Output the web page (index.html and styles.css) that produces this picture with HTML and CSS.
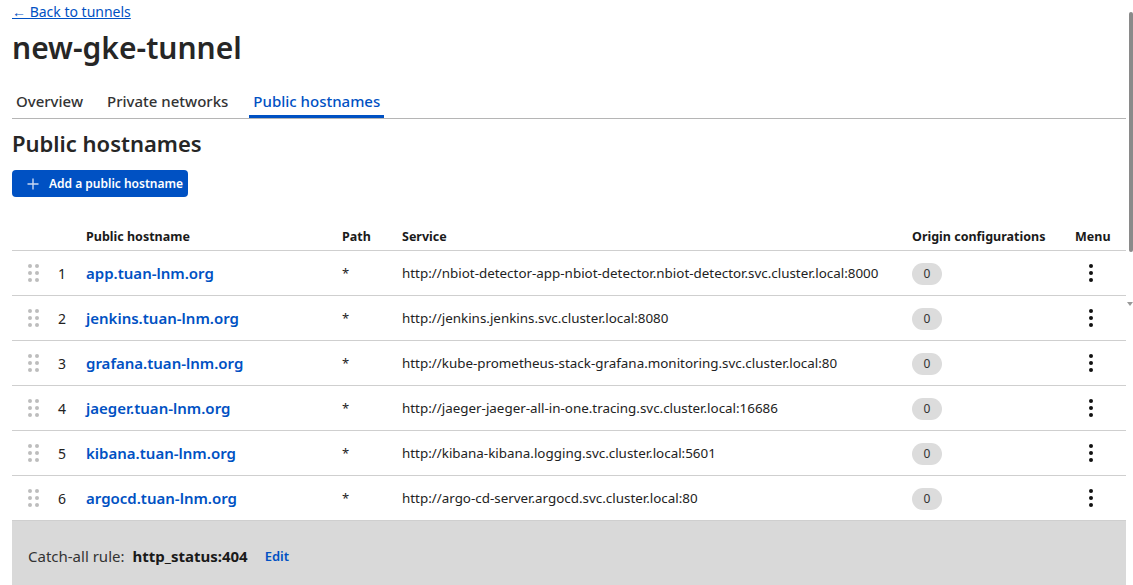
FILE: index.html
```html
<!DOCTYPE html>
<html>
<head>
<meta charset="utf-8">
<link rel="stylesheet" href="styles.css">
</head>
<body>
<div class="page">
  <a class="back" href="#">← Back to tunnels</a>
  <h1 class="title">new-gke-tunnel</h1>
  <nav class="tabs">
    <span class="tab">Overview</span>
    <span class="tab">Private networks</span>
    <span class="tab active">Public hostnames</span>
  </nav>
  <h2 class="section">Public hostnames</h2>
  <button class="add-btn">
    <svg class="plus" width="12" height="12" viewBox="0 0 12 12"><path d="M6 0.5V11.5M0.5 6H11.5" stroke="#c9d8f2" stroke-width="1.4" fill="none"/></svg>
    Add a public hostname
  </button>

  <div class="table">
    <div class="row head">
      <div class="c-idx"></div>
      <div>Public hostname</div>
      <div>Path</div>
      <div>Service</div>
      <div>Origin configurations</div>
      <div>Menu</div>
    </div>

    <div class="row">
      <div class="c-idx"><span class="grip"><i></i><i></i><i></i><i></i><i></i><i></i></span><span class="num">1</span></div>
      <div><a class="host" href="#">app.tuan-lnm.org</a></div>
      <div class="path">*</div>
      <div class="svc">http://nbiot-detector-app-nbiot-detector.nbiot-detector.svc.cluster.local:8000</div>
      <div><span class="badge">0</span></div>
      <div><span class="kebab"><i></i><i></i><i></i></span></div>
    </div>
    <div class="row">
      <div class="c-idx"><span class="grip"><i></i><i></i><i></i><i></i><i></i><i></i></span><span class="num">2</span></div>
      <div><a class="host" href="#">jenkins.tuan-lnm.org</a></div>
      <div class="path">*</div>
      <div class="svc">http://jenkins.jenkins.svc.cluster.local:8080</div>
      <div><span class="badge">0</span></div>
      <div><span class="kebab"><i></i><i></i><i></i></span></div>
    </div>
    <div class="row">
      <div class="c-idx"><span class="grip"><i></i><i></i><i></i><i></i><i></i><i></i></span><span class="num">3</span></div>
      <div><a class="host" href="#">grafana.tuan-lnm.org</a></div>
      <div class="path">*</div>
      <div class="svc">http://kube-prometheus-stack-grafana.monitoring.svc.cluster.local:80</div>
      <div><span class="badge">0</span></div>
      <div><span class="kebab"><i></i><i></i><i></i></span></div>
    </div>
    <div class="row">
      <div class="c-idx"><span class="grip"><i></i><i></i><i></i><i></i><i></i><i></i></span><span class="num">4</span></div>
      <div><a class="host" href="#">jaeger.tuan-lnm.org</a></div>
      <div class="path">*</div>
      <div class="svc">http://jaeger-jaeger-all-in-one.tracing.svc.cluster.local:16686</div>
      <div><span class="badge">0</span></div>
      <div><span class="kebab"><i></i><i></i><i></i></span></div>
    </div>
    <div class="row">
      <div class="c-idx"><span class="grip"><i></i><i></i><i></i><i></i><i></i><i></i></span><span class="num">5</span></div>
      <div><a class="host" href="#">kibana.tuan-lnm.org</a></div>
      <div class="path">*</div>
      <div class="svc">http://kibana-kibana.logging.svc.cluster.local:5601</div>
      <div><span class="badge">0</span></div>
      <div><span class="kebab"><i></i><i></i><i></i></span></div>
    </div>
    <div class="row">
      <div class="c-idx"><span class="grip"><i></i><i></i><i></i><i></i><i></i><i></i></span><span class="num">6</span></div>
      <div><a class="host" href="#">argocd.tuan-lnm.org</a></div>
      <div class="path">*</div>
      <div class="svc">http://argo-cd-server.argocd.svc.cluster.local:80</div>
      <div><span class="badge">0</span></div>
      <div><span class="kebab"><i></i><i></i><i></i></span></div>
    </div>
  </div>

  <div class="catchall">
    <span class="ca-label">Catch-all rule:</span>
    <span class="ca-value">http_status:404</span>
    <a class="ca-edit" href="#">Edit</a>
  </div>
</div>
<div class="scrollbar"><div class="thumb"></div><div class="arrow"></div></div>
</body>
</html>
```
FILE: styles.css
```css
html, body {
  margin: 0;
  padding: 0;
  background: #fff;
  overflow: hidden;
}
body {
  font-family: "Noto Sans", "Open Sans", sans-serif;
  color: #222;
}
.page {
  width: 1114px;
  padding: 0 0 0 12px;
}
.back {
  display: block;
  font-size: 14px;
  line-height: 16px;
  padding-top: 4px;
  color: #0051c3;
  text-decoration: underline;
}
.title {
  margin: 8px 0 0 0;
  font-size: 30px;
  line-height: 40px;
  font-weight: 600;
  color: #262626;
}
.tabs {
  display: flex;
  margin-top: 17px;
  border-bottom: 1px solid #b5b5b5;
  height: 34px;
  box-sizing: border-box;
}
.tab {
  font-size: 15px;
  font-weight: 500;
  color: #333;
  padding: 5px 4px 0 4px;
  margin-right: 16px;
  line-height: 22px;
  box-sizing: border-box;
}
.tab.active {
  color: #0051c3;
  border-bottom: 3px solid #0051c3;
  height: 33px;
  margin-left: 1px;
}
.section {
  margin: 8px 0 0 0;
  font-size: 22px;
  line-height: 32px;
  font-weight: 600;
  color: #262626;
}
.add-btn {
  display: flex;
  align-items: center;
  gap: 10px;
  margin-top: 11px;
  height: 27px;
  width: 176px;
  padding: 0 0 0 15px;
  border: none;
  border-radius: 4px;
  background: #0051c3;
  color: #fff;
  font-family: inherit;
  font-size: 12px;
  font-weight: 600;
}
.table {
  margin-top: 25px;
}
.row {
  display: grid;
  grid-template-columns: 74px 256px 60px 510px 163px 51px;
  align-items: center;
  height: 45px;
  border-bottom: 1px solid #cfcfcf;
  box-sizing: border-box;
  font-size: 13px;
}
.row.head {
  height: 29px;
  font-weight: 700;
  font-size: 12.5px;
  color: #1a1a1a;
}
.c-idx {
  display: flex;
  align-items: center;
}
.grip {
  display: grid;
  grid-template-columns: 4px 4px;
  column-gap: 3px;
  row-gap: 3px;
  margin-left: 16px;
}
.grip i {
  width: 4px;
  height: 4px;
  border-radius: 50%;
  background: #bdbdbd;
}
.num {
  margin-left: 19px;
  font-size: 14px;
  color: #222;
}
.host {
  color: #0051c3;
  font-size: 15px;
  font-weight: 600;
  text-decoration: none;
}
.path {
  font-size: 13px;
}
.svc {
  font-size: 13.4px;
  color: #222;
  white-space: nowrap;
}
.badge {
  display: inline-block;
  width: 30px;
  height: 22px;
  line-height: 22px;
  border-radius: 11px;
  background: #dcdcdc;
  text-align: center;
  font-size: 12px;
  color: #333;
  margin-top: 2px;
}
.kebab {
  display: flex;
  flex-direction: column;
  gap: 3px;
  margin-left: 14px;
  width: 4px;
}
.kebab i {
  width: 4px;
  height: 4px;
  border-radius: 50%;
  background: #111;
}
.catchall {
  background: #d9d9d9;
  height: 70px;
  display: flex;
  align-items: center;
  padding: 0 0 0 16px;
  font-size: 15px;
}
.ca-label {
  color: #333;
}
.ca-value {
  font-weight: 700;
  margin-left: 8px;
  color: #1a1a1a;
}
.ca-edit {
  margin-left: 17px;
  font-size: 13px;
  font-weight: 600;
  color: #0051c3;
  text-decoration: none;
}
.scrollbar {
  position: fixed;
  right: 0;
  top: 0;
  width: 7px;
  height: 585px;
}
.thumb {
  position: absolute;
  top: 12px;
  left: 3px;
  width: 4px;
  height: 240px;
  background: #8a8a8a;
  border-radius: 2px;
}
.arrow {
  position: absolute;
  top: 302px;
  left: 1px;
  width: 0;
  height: 0;
  border-left: 3px solid transparent;
  border-right: 3px solid transparent;
  border-top: 4px solid #999;
}
```
